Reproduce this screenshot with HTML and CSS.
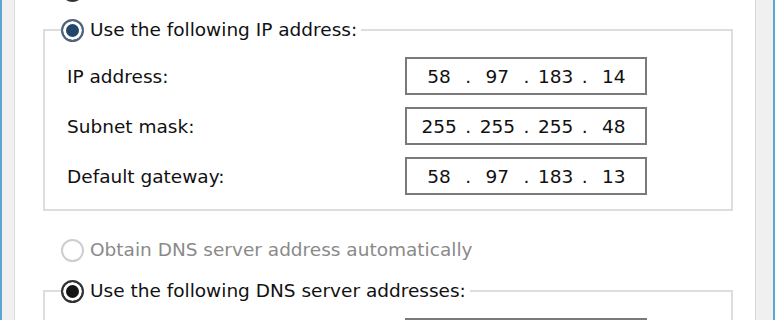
FILE: index.html
```html
<!DOCTYPE html>
<html lang="en">
<head>
    <meta charset="UTF-8">
    <title>Internet Protocol Version 4 (TCP/IPv4) Properties</title>
    <link rel="stylesheet" href="styles.css">
</head>
<body>
    <div class="window">
        <div class="edge-blue"></div>
        <div class="edge-gray edge-left"></div>

        <div class="panel">
            <label class="option top-option">
                <input type="radio" name="ip" class="radio">
                <span class="top-text">Obtain an IP address automatically</span>
            </label>

            <fieldset class="group">
                <legend class="option">
                    <input type="radio" name="ip" class="radio focus" checked>
                    Use the following IP address:
                </legend>
                <div class="fields">
                    <span class="field-label">IP address:</span>
                    <div class="ip-box">
                        <span class="octet">58</span><span class="dot">.</span>
                        <span class="octet">97</span><span class="dot">.</span>
                        <span class="octet">183</span><span class="dot">.</span>
                        <span class="octet">14</span>
                    </div>

                    <span class="field-label">Subnet mask:</span>
                    <div class="ip-box">
                        <span class="octet">255</span><span class="dot">.</span>
                        <span class="octet">255</span><span class="dot">.</span>
                        <span class="octet">255</span><span class="dot">.</span>
                        <span class="octet">48</span>
                    </div>

                    <span class="field-label">Default gateway:</span>
                    <div class="ip-box">
                        <span class="octet">58</span><span class="dot">.</span>
                        <span class="octet">97</span><span class="dot">.</span>
                        <span class="octet">183</span><span class="dot">.</span>
                        <span class="octet">13</span>
                    </div>
                </div>
            </fieldset>

            <label class="option disabled dns-auto">
                <input type="radio" name="dns" class="radio" disabled>
                Obtain DNS server address automatically
            </label>

            <fieldset class="group dns-group">
                <legend class="option">
                    <input type="radio" name="dns" class="radio" checked>
                    Use the following DNS server addresses:
                </legend>
                <div class="fields">
                    <span class="field-label">Preferred DNS server:</span>
                    <div class="ip-box">
                        <span class="octet"></span><span class="dot">.</span>
                        <span class="octet"></span><span class="dot">.</span>
                        <span class="octet"></span><span class="dot">.</span>
                        <span class="octet"></span>
                    </div>

                    <span class="field-label">Alternate DNS server:</span>
                    <div class="ip-box">
                        <span class="octet"></span><span class="dot">.</span>
                        <span class="octet"></span><span class="dot">.</span>
                        <span class="octet"></span><span class="dot">.</span>
                        <span class="octet"></span>
                    </div>
                </div>
            </fieldset>
        </div>

        <div class="edge-gray edge-right"></div>
        <div class="edge-blue"></div>
    </div>
</body>
</html>
```

FILE: styles.css
```css
body, html {
    margin: 0;
    padding: 0;
    height: 100%;
    overflow: hidden;
    background: #fff;
    font-family: 'DejaVu Sans', 'Liberation Sans', sans-serif;
    font-size: 18.5px;
    color: #111;
}

.window {
    display: flex;
    height: 320px;
    overflow: hidden;
}

.edge-blue {
    width: 2px;
    background: #5aa7d2;
}

.edge-gray {
    background: #f0f0f0;
}

.edge-left {
    width: 12px;
    border-right: 1px solid #dadada;
}

.edge-right {
    width: 17px;
    border-left: 1px solid #d6d6d6;
}

.panel {
    flex: 1;
    background: #fff;
    padding-left: 28px;
}

/* radio rows */
.option {
    display: flex;
    align-items: center;
    gap: 6px;
    height: 24px;
    line-height: 24px;
    white-space: nowrap;
}

.radio {
    appearance: none;
    -webkit-appearance: none;
    width: 23px;
    height: 23px;
    margin: 0;
    border: 2px solid #333;
    border-radius: 50%;
    background: #fff;
    flex-shrink: 0;
}

.radio:checked {
    background: #151515;
    box-shadow: inset 0 0 0 3px #fff;
}

.radio.focus {
    border-color: #51647a;
}

.radio.focus:checked {
    background: #23476b;
}

.radio:disabled {
    border-color: #cdcdcd;
}

.disabled {
    color: #8a8a8a;
}

.top-option {
    margin-top: -22px;
    margin-left: 18px;
    align-items: flex-end;
}

.top-text {
    margin-bottom: 4px;
}

.dns-auto {
    margin-top: 27px;
    margin-left: 18px;
}

/* group boxes */
.group {
    width: 686px;
    margin: 15px 0 0 0;
    padding: 0 0 14px 0;
    border: 2px solid #dddddd;
    min-inline-size: 0;
}

.top-option + .group {
    margin-top: 16px;
}

.group legend {
    margin-left: 16px;
    padding: 0 4px 0 0;
}

.dns-group {
    margin-top: 17px;
}

.fields {
    display: grid;
    grid-template-columns: 338px 242px;
    grid-auto-rows: 38px;
    row-gap: 12px;
    margin-top: 15px;
    padding-left: 22px;
    align-items: center;
}

.field-label {
    white-space: nowrap;
}

.ip-box {
    box-sizing: border-box;
    height: 38px;
    border: 2px solid #7a7a7a;
    padding: 0 8px 0 9px;
    display: flex;
    align-items: center;
    background: #fff;
}

.octet {
    flex: 1;
    text-align: center;
}

.dot {
    width: 12px;
    text-align: center;
}
```
